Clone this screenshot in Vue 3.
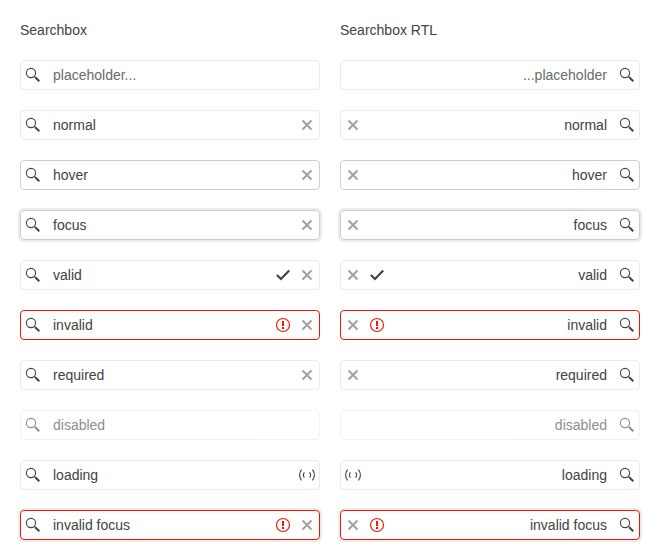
<script setup>
const rows = [
  { text: 'placeholder...', state: 'placeholder' },
  { text: 'normal', clear: true },
  { text: 'hover', state: 'hover', clear: true },
  { text: 'focus', state: 'focus', clear: true },
  { text: 'valid', clear: true, mark: 'valid' },
  { text: 'invalid', state: 'invalid', clear: true, mark: 'invalid' },
  { text: 'required', clear: true },
  { text: 'disabled', state: 'disabled' },
  { text: 'loading', loading: true },
  { text: 'invalid focus', state: 'invalid invalid-focus', clear: true, mark: 'invalid' },
]
const columns = [
  { title: 'Searchbox', dir: 'ltr' },
  { title: 'Searchbox RTL', dir: 'rtl' },
]
</script>

<template>
  <main class="page">
    <section v-for="col in columns" :key="col.dir" class="column">
      <h1 class="title">{{ col.title }}</h1>
      <div v-for="row in rows" :key="row.text" class="searchbox" :class="row.state" :dir="col.dir">
        <span class="icon">
          <svg viewBox="0 0 16 16"><circle cx="6" cy="6" r="4.6" fill="none" stroke="currentColor" stroke-width="1.1" /><path d="M9.2 9.2l1.6 1.6" stroke="currentColor" stroke-width="1.1" /><path d="M10.2 10.2l4.1 4.1" stroke="currentColor" stroke-width="2" /></svg>
        </span>
        <span class="value">{{ row.text }}</span>
        <span v-if="row.mark === 'valid'" class="icon">
          <svg viewBox="0 0 16 16"><path d="M1.9 7.9l4.1 4.1L14.2 3.6" fill="none" stroke="currentColor" stroke-width="2.1" /></svg>
        </span>
        <span v-if="row.mark === 'invalid'" class="icon error">
          <svg viewBox="0 0 16 16"><circle cx="8" cy="8" r="6.5" fill="none" stroke="currentColor" stroke-width="1.15" /><path d="M7 4h2v5H7zM7 10h2v2H7z" fill="currentColor" /></svg>
        </span>
        <span v-if="row.clear" class="icon clear">
          <svg viewBox="0 0 16 16"><path d="M3.5 3.5l9 9M12.5 3.5l-9 9" stroke="currentColor" stroke-width="2" /></svg>
        </span>
        <span v-if="row.loading" class="icon">
          <svg viewBox="0 0 16 16"><path d="M2.6 2.6Q-1.4 8 2.6 13.4M13.4 2.6Q17.4 8 13.4 13.4M5.4 5.3Q3.4 8 5.4 10.7M10.6 5.3Q12.6 8 10.6 10.7" fill="none" stroke="currentColor" stroke-width="1.1" /></svg>
        </span>
      </div>
    </section>
  </main>
</template>

<style>
body { margin: 0; background: #fff; }
</style>

<style scoped>
.page {
  display: flex;
  gap: 20px;
  padding: 20px;
  height: 560px;
  box-sizing: border-box;
  overflow: hidden;
  font: 14px/20px "Liberation Sans", Arial, sans-serif;
  color: #424242;
}
.column { width: 300px; display: flex; flex-direction: column; gap: 20px; }
.title { margin: 0; font: inherit; flex: none; }
.searchbox {
  display: flex;
  flex: none;
  align-items: center;
  box-sizing: border-box;
  height: 30px;
  border: 1px solid #ebebeb;
  border-radius: 4px;
}
.value { flex: 1; padding: 0 8px; }
.icon { width: 24px; height: 28px; display: flex; align-items: center; justify-content: center; }
.icon svg { width: 16px; height: 16px; display: block; }
.clear { color: #a1a1a1; }
.error { color: #f31700; }
.placeholder .value { color: #6b6b6b; }
.hover { border-color: #cecece; }
.focus { border-color: #cecece; box-shadow: 0 0 0 2px #ebebeb; }
.invalid { border-color: #f31700; }
.invalid-focus { box-shadow: 0 0 0 2px #ebebeb; }
.disabled { opacity: 0.6; }
</style>
